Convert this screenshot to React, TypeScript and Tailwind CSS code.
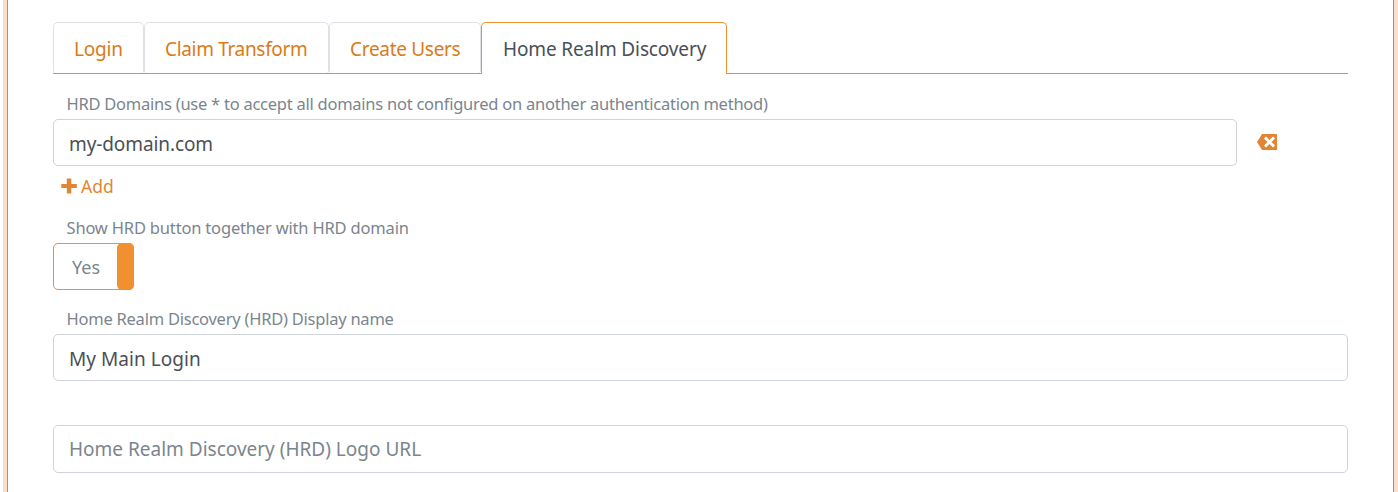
import React from "react";

const tabs = [
  { label: "Login", box: "w-[91px]", text: "tracking-[-0.2px]" },
  { label: "Claim Transform", box: "w-[185px]", text: "tracking-[-0.33px]" },
  { label: "Create Users", box: "w-[152px]", text: "tracking-[-0.3px]" },
];

const field =
  "block rounded-[5px] border border-[#ced4da] bg-white px-[15px] text-[19px] text-[#495057] outline-none placeholder:text-[#7b858e] placeholder:opacity-100";
const label = "block pl-[13.5px] text-[16.5px] leading-[24px] text-[#7b858e] whitespace-nowrap";

export default function App() {
  return (
    <div className="h-[492px] overflow-hidden bg-white pl-[3px] font-['Noto_Sans','Open_Sans',sans-serif]">
      <div className="h-full bg-[#f9dfcb] px-1">
        <main className="h-full border-x border-[#d98437] bg-white pt-[22px] pr-[45px] pl-[45px]">
          <nav className="flex h-[52px] border-b border-[#e58e3a] text-[19px] leading-[50px] whitespace-nowrap">
            {tabs.map((t) => (
              <a
                key={t.label}
                className={`${t.box} ${t.text} h-[51px] rounded-[5px] rounded-b-[3px] border border-b-0 border-[#dee2e6] pl-[20px] pt-px text-[#d97b17]`}
              >
                {t.label}
              </a>
            ))}
            <a className="h-[52px] w-[246px] rounded-t-[5px] border border-b-0 border-[#f09030] bg-white pt-px pl-[21px] tracking-[-0.13px] text-[#495057]">
              Home Realm Discovery
            </a>
          </nav>

          <label className={`${label} mt-[18px] tracking-[-0.25px]`}>
            HRD Domains (use * to accept all domains not configured on another authentication method)
          </label>
          <div className="mt-[3px] flex items-center">
            <input
              className={`${field} h-[47px] w-[1184px] pt-[3px] leading-[42px] tracking-[-0.1px]`}
              defaultValue="my-domain.com"
            />
            <svg className="mb-px ml-5 h-4 w-[21px]" viewBox="0 0 21 16">
              <path d="M0 8 5 0H20V16H5Z" fill="#df8735" />
              <path d="m8 3.5 9 9m0-9-9 9" stroke="#fff" strokeWidth="2.8" />
            </svg>
          </div>
          <div className="mt-[7px] ml-[8px] flex h-[26px] items-center gap-[4px] text-[17.5px] leading-[26px] text-[#df8735]">
            <svg className="h-4 w-4" viewBox="0 0 16 16">
              <path d="M5.8 0.5h4.5v5.5h5.5v4h-5.5v5.5h-4.5v-5.5h-5.5v-4h5.5z" fill="#df8735" />
            </svg>
            <span>Add</span>
          </div>

          <label className={`${label} mt-[17px] tracking-[-0.18px]`}>
            Show HRD button together with HRD domain
          </label>
          <div className="mt-[3px] flex h-[47px] w-[81px] justify-between rounded-[5px] border border-[#f09030] pl-[18px] text-[18px] leading-[46px] text-[#7b858e]">
            <span>Yes</span>
            <span className="-my-px -mr-px w-[17px] rounded-[5px] bg-[#f09030]" />
          </div>

          <label className={`${label} mt-[17px] tracking-[-0.24px]`}>
            Home Realm Discovery (HRD) Display name
          </label>
          <input
            className={`${field} mt-[3px] h-[47px] w-full pt-[3px] leading-[42px] tracking-[0.05px]`}
            defaultValue="My Main Login"
          />
          <input
            className={`${field} mt-[44px] h-[48px] w-full pb-px leading-[45px]`}
            placeholder="Home Realm Discovery (HRD) Logo URL"
          />
        </main>
      </div>
    </div>
  );
}
